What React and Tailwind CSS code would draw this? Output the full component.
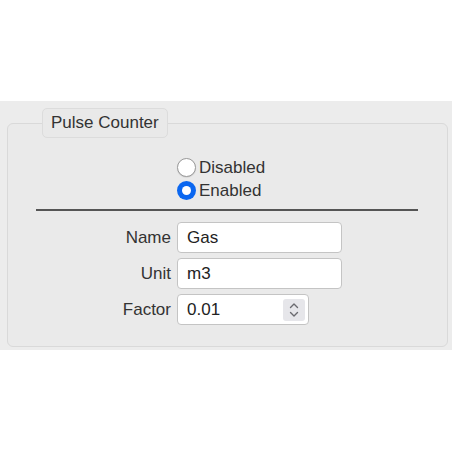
import React from "react";

export default function App() {
  const font = { fontFamily: '"Liberation Sans", Arial, sans-serif' };
  return (
    <div className="w-[452px] h-[452px] bg-white pt-[101px]" style={font}>
      <div className="bg-[#ececec] h-[249px] pt-[22px] pl-[7px] pr-[4px]">
        <div className="relative h-[224px] border border-[#d9d9d9] rounded-[6px] bg-[#eaeaea]">
          <div className="absolute left-[34px] top-[-16px] h-[30px] px-[8px] flex items-center rounded-[5px] border border-[#dcdcdc] bg-[#e9e9e9] text-[17px] text-[#333]">
            Pulse Counter
          </div>
          <div className="pt-[32px] flex flex-col">
            <div className="ml-[169px] flex flex-col">
              <label className="h-[23px] flex items-center gap-[3px] text-[17px] text-[#333]">
                <span className="w-[19px] h-[19px] rounded-full border border-[#9a9a9a] bg-white shadow-[0_0.5px_1px_rgba(0,0,0,0.15)]" />
                Disabled
              </label>
              <label className="h-[23px] flex items-center gap-[3px] text-[17px] text-[#333]">
                <span className="w-[19px] h-[19px] rounded-full bg-[#0b67f0] flex items-center justify-center">
                  <span className="w-[9px] h-[9px] rounded-full bg-white" />
                </span>
                Enabled
              </label>
            </div>
            <div className="ml-[28px] w-[382px] h-[2px] bg-[#555] mt-[7px]" />
            <div className="mt-[11px] flex flex-col gap-[5px]">
              <div className="flex items-center gap-[6px]">
                <div className="w-[163px] text-right text-[17px] text-[#333]">Name</div>
                <div className="w-[165px] h-[31px] rounded-[4px] border border-[#c4c4c4] bg-white flex items-center px-[9px] text-[17px] text-[#222]">Gas</div>
              </div>
              <div className="flex items-center gap-[6px]">
                <div className="w-[163px] text-right text-[17px] text-[#333]">Unit</div>
                <div className="w-[165px] h-[31px] rounded-[4px] border border-[#c4c4c4] bg-white flex items-center px-[9px] text-[17px] text-[#222]">m3</div>
              </div>
              <div className="flex items-center gap-[6px]">
                <div className="w-[163px] text-right text-[17px] text-[#333]">Factor</div>
                <div className="w-[132px] h-[31px] rounded-[4px] border border-[#c4c4c4] bg-white flex items-center pl-[9px] pr-[3px] text-[17px] text-[#222]">
                  <span className="flex-1">0.01</span>
                  <span className="w-[22px] h-[22px] rounded-[3px] bg-[#e6e6ea] flex items-center justify-center">
                    <svg width="10" height="16" viewBox="0 0 10 16" fill="none" stroke="#6b6b70" strokeWidth="1.4" strokeLinecap="round" strokeLinejoin="round">
                      <path d="M1.5 5.5 L5 2 L8.5 5.5" />
                      <path d="M1.5 10.5 L5 14 L8.5 10.5" />
                    </svg>
                  </span>
                </div>
              </div>
            </div>
          </div>
        </div>
      </div>
    </div>
  );
}
